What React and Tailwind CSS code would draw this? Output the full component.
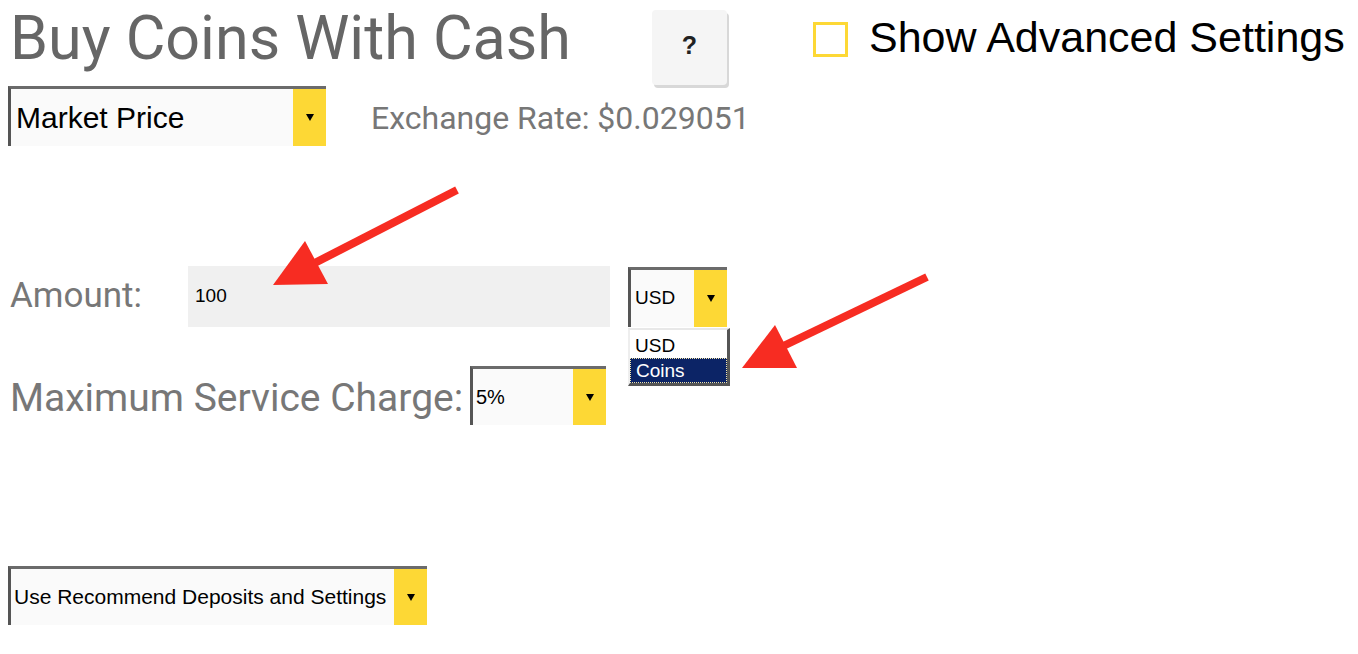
import React from "react";

function Arrow() {
  return <span className="block w-0 h-0 border-l-[4px] border-r-[4px] border-t-[7px] border-l-transparent border-r-transparent border-t-black" />;
}

function Select({ width, text, textClass }) {
  return (
    <div className={`flex h-full border-t-[3px] border-l-[3px] border-t-[#6b6b6b] border-l-[#555] bg-[#fafafa] ${width}`}>
      <div className={`flex-1 flex items-center pl-[3px] text-black font-['Liberation_Sans',sans-serif] whitespace-nowrap ${textClass}`}>{text}</div>
      <div className="w-[33px] bg-[#fdd835] flex items-center justify-center">
        <Arrow />
      </div>
    </div>
  );
}

export default function App() {
  return (
    <div className="relative w-[1358px] h-[654px] bg-white overflow-hidden font-['Roboto',sans-serif]">
      {/* Row 1 */}
      <div className="flex items-start h-[86px]">
        <h1 className="w-[642px] ml-[10px] mt-[8px] text-[61px] leading-none text-[#666] whitespace-nowrap">Buy Coins With Cash</h1>
        <button className="mt-[10px] w-[75px] h-[75px] rounded-[4px] bg-[#f5f5f5] shadow-[2px_3px_0_#d8d8d8] flex items-center justify-center pb-[4px] text-[25px] font-bold text-[#222] font-['Liberation_Sans',sans-serif]">?</button>
        <div className="ml-[86px] mt-[20px] flex items-center">
          <span className="w-[35px] h-[35px] border-[3px] border-[#fdd835] bg-white" />
          <span className="ml-[21px] -mt-[4px] text-[43px] leading-none text-black font-['Liberation_Sans',sans-serif] whitespace-nowrap">Show Advanced Settings</span>
        </div>
      </div>

      {/* Row 2 */}
      <div className="flex items-center h-[60px]">
        <div className="ml-[8px] h-[60px]">
          <Select width="w-[318px]" text="Market Price" textClass="text-[30px] pl-[5px]" />
        </div>
        <div className="ml-[45px] mt-[3px] text-[32px] leading-none text-[#777] whitespace-nowrap">Exchange Rate: $0.029051</div>
      </div>

      {/* Amount row */}
      <div className="flex items-center h-[61px] mt-[120px]">
        <div className="w-[188px] pl-[10px] text-[35px] text-[#777]">Amount:</div>
        <div className="w-[422px] h-[61px] bg-[#f0f0f0] flex items-center pl-[7px] text-[19px] text-black font-['Liberation_Sans',sans-serif]">100</div>
        <div className="relative ml-[18px] h-[60px]">
          <Select width="w-[99px]" text="USD" textClass="text-[19px] pl-[4px]" />
          <div className="absolute left-0 top-[61px] w-[102px] h-[58px] bg-white border-t-[2px] border-l-[2px] border-t-[#e8e8e8] border-l-[#eee] border-r-[3px] border-b-[3px] border-r-[#555] border-b-[#555] pt-[3px] font-['Liberation_Sans',sans-serif] text-[19px] leading-none">
            <div className="h-[25px] flex items-center pl-[5px] text-black">USD</div>
            <div className="h-[25px] flex items-center pl-[5px] bg-[#0c2466] text-white border border-dotted border-[#f3e6a8]">Coins</div>
          </div>
        </div>
      </div>

      {/* Service charge row */}
      <div className="flex items-center h-[59px] mt-[39px]">
        <div className="pl-[10px] w-[470px] mt-[6px] text-[39px] text-[#777] whitespace-nowrap">Maximum Service Charge:</div>
        <div className="h-[59px]">
          <Select width="w-[136px]" text="5%" textClass="text-[20px] pl-[2px]" />
        </div>
      </div>

      {/* Bottom select */}
      <div className="mt-[141px] ml-[8px] h-[59px]">
        <Select width="w-[419px]" text="Use Recommend Deposits and Settings" textClass="text-[21px] pl-[3px]" />
      </div>

      {/* Annotation arrows */}
      <svg className="absolute inset-0 pointer-events-none" width="1358" height="654" viewBox="0 0 1358 654">
        <line x1="457" y1="190" x2="305" y2="268" stroke="#f72c22" strokeWidth="8" />
        <polygon points="273,285 305,241 328,284" fill="#f72c22" />
        <line x1="927" y1="277" x2="775" y2="350" stroke="#f72c22" strokeWidth="8" />
        <polygon points="742,368 775,325 797,368" fill="#f72c22" />
      </svg>
    </div>
  );
}
